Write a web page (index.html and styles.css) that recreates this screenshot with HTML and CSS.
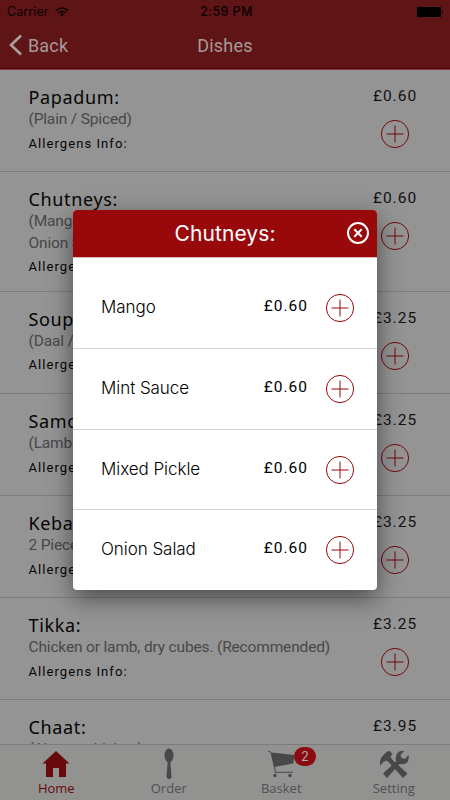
FILE: index.html
```html
<!DOCTYPE html>
<html lang="en">
<head>
<meta charset="utf-8">
<title>Dishes</title>
<link rel="stylesheet" href="styles.css">
</head>
<body>
<svg width="0" height="0" class="defs"><symbol id="plus" viewBox="0 0 28 28"><circle cx="14" cy="14" r="13.6"/><path d="M14 5.5v17M5.5 14h17"/></symbol></svg>
<div class="app">
  <header class="header">
    <div class="status">
      <span class="carrier">Carrier <svg class="wifi" viewBox="0 0 14 10"><path d="M1 3.6Q7-1.6 13 3.6M3.2 6Q7 2.8 10.8 6" fill="none" stroke="#0a0000" stroke-width="1.5"/><path d="M4.8 7.3Q7 5.8 9.2 7.3L7 9.6z" fill="#0a0000"/></svg></span>
      <span class="time">2:59 PM</span>
      <svg class="battery" viewBox="0 0 27 10"><rect width="24" height="10" rx="1"/><path d="M25 3.5q2 1.500 0 3z"/></svg>
    </div>
    <div class="nav">
      <span class="back"><svg viewBox="0 0 14 22"><path d="M12 1.500L2 11l10 9.500"/></svg>Back</span>
      <h1>Dishes</h1>
      <span></span>
    </div>
  </header>
  <main class="list">
    <section class="dish"><div><h2>Papadum:</h2><p>(Plain / Spiced)</p><small>Allergens Info:</small></div><div class="buy"><b>£0.60</b><svg class="plus"><use href="#plus"/></svg></div></section>
    <section class="dish tall"><div><h2>Chutneys:</h2><p>(Mango<br>Onion Salad)</p><small>Allergens Info:</small></div><div class="buy"><b>£0.60</b><svg class="plus"><use href="#plus"/></svg></div></section>
    <section class="dish"><div><h2>Soup:</h2><p>(Daal /</p><small>Allergens Info:</small></div><div class="buy"><b>£3.25</b><svg class="plus"><use href="#plus"/></svg></div></section>
    <section class="dish"><div><h2>Samosa:</h2><p>(Lamb</p><small>Allergens Info:</small></div><div class="buy"><b>£3.25</b><svg class="plus"><use href="#plus"/></svg></div></section>
    <section class="dish"><div><h2>Kebab:</h2><p>2 Pieces</p><small>Allergens Info:</small></div><div class="buy"><b>£3.25</b><svg class="plus"><use href="#plus"/></svg></div></section>
    <section class="dish"><div><h2>Tikka:</h2><p>Chicken or lamb, dry cubes. (Recommended)</p><small>Allergens Info:</small></div><div class="buy"><b>£3.25</b><svg class="plus"><use href="#plus"/></svg></div></section>
    <section class="dish"><div><h2>Chaat:</h2><p>(Aloo or chicken)</p></div><div class="buy"><b>£3.95</b></div></section>
  </main>
  <nav class="tabs">
    <a class="tab active"><svg viewBox="0 0 32 32"><path d="M16 3L2.500 15.500H6V29h7v-9h6v9h7V15.500h3.500z"/></svg>Home</a>
    <a class="tab"><svg viewBox="0 0 32 32"><ellipse cx="16" cy="7.500" rx="4.500" ry="7"/><path d="M14.800 13h2.400l1.300 15q0 3-2.500 3t-2.500-3z"/></svg>Order</a>
    <a class="tab"><svg viewBox="0 0 32 32"><path d="M6.200 4.500L29.500 7 28.300 15.500 9 19z"/><path d="M3 3.200l3 1 4.300 18.600-.3 1.500H28" fill="none" stroke="#484848"/><circle cx="10" cy="27.500" r="1.700"/><circle cx="25" cy="27.500" r="1.700"/></svg>Basket<i class="badge">2</i></a>
    <a class="tab"><svg viewBox="0 0 32 32"><path d="M2.200 18Q1 11 5.500 7L9 3.500l2.500-.5 3 3-2 2.500 1.500 3L29.500 25.500 25 30 10.500 14l-2.500-1.500Q4.500 14 2.200 18z"/><path d="M5 25.500L18 13.500Q17 8 19.500 5q3-3 6.500-2l-3.500 4 1 3 3.500 1 3.500-4q1 5-2 8-3 2-7 1L9 30z"/></svg>Setting</a>
  </nav>
</div>
<div class="modal">
  <div class="modal-head"><span></span><h3>Chutneys:</h3><svg class="close" viewBox="0 0 22 22"><circle cx="11" cy="11" r="10"/><path d="M7.300 7.300l7.400 7.400M14.700 7.300l-7.400 7.400"/></svg></div>
  <div class="option"><span>Mango</span><b>£0.60</b><svg class="plus"><use href="#plus"/></svg></div>
  <div class="option"><span>Mint Sauce</span><b>£0.60</b><svg class="plus"><use href="#plus"/></svg></div>
  <div class="option"><span>Mixed Pickle</span><b>£0.60</b><svg class="plus"><use href="#plus"/></svg></div>
  <div class="option"><span>Onion Salad</span><b>£0.60</b><svg class="plus"><use href="#plus"/></svg></div>
</div>
</body>
</html>
```
FILE: styles.css
```css
* { box-sizing: border-box; margin: 0; }
body { width: 450px; height: 800px; overflow: hidden; font-family: Roboto, sans-serif; background: #949494; }
.defs { position: absolute; }
.app { display: flex; flex-direction: column; height: 800px; }
.header { height: 70px; flex: none; background: #5f1416; border-bottom: 1px solid #7a4444; box-shadow: inset 0 -1px #5c0004; }
.status { height: 23px; padding: 0 6px 0 7px; display: grid; grid-template-columns: 1fr auto 1fr; align-items: center; font: 12.5px Inter, sans-serif; color: #0a0000; }
.carrier { display: flex; align-items: center; gap: 6px; letter-spacing: .1px; }
.wifi { width: 14px; height: 10px; }
.time { font-weight: 500; letter-spacing: .4px; padding-left: 2px; }
.battery { width: 27px; height: 10px; justify-self: end; fill: #000; }
.nav { height: 44px; display: grid; grid-template-columns: 1fr auto 1fr; align-items: center; padding: 0 9px; color: #a69a9a; }
.back { display: flex; align-items: center; gap: 5px; font-size: 18px; letter-spacing: .15px; }
.back svg { width: 14px; height: 22px; fill: none; stroke: #aaa0a0; stroke-width: 2.600; }
h1 { font-size: 18px; font-weight: 400; letter-spacing: .2px; }
.list { flex: 1; overflow: hidden; min-height: 0; }
.dish { height: 102.100px; padding: 15px 33px 0 28.500px; display: flex; justify-content: space-between; border-bottom: 1px solid #7c7c7c; }
.tall { height: 119.600px; }
h2 { font: 400 18px/24px "Noto Sans", sans-serif; letter-spacing: .650px; color: #050505; }
.dish p { font-size: 15.500px; line-height: 21.500px; color: #484848; font-weight: 400; letter-spacing: -.160px; white-space: nowrap; }
.dish small { display: block; font-size: 13px; line-height: 16px; margin-top: 5.300px; letter-spacing: 1.070px; color: #050505; }
.buy { width: 44px; display: flex; flex-direction: column; align-items: center; gap: 13px; }
b { font-size: 15.500px; line-height: 22px; font-weight: 400; letter-spacing: 1px; color: #111; white-space: nowrap; }
.plus { display: block; width: 28px; height: 28px; fill: none; stroke: #73070a; stroke-width: 1; overflow: visible; }
.tabs { height: 56.500px; flex: none; border-top: 1px solid #7c7c7c; background: #929290; display: grid; grid-template-columns: repeat(4, 1fr); }
.tab { position: relative; display: flex; flex-direction: column; align-items: center; padding-top: 3.500px; font: 13px/17px "Open Sans", sans-serif; color: #505050; fill: #484848; }
.tab svg { width: 32px; height: 32px; }
.active { color: #67080c; fill: #68090d; }
.badge { position: absolute; left: 69px; top: 2.500px; width: 22px; height: 19px; border-radius: 10px; background: #8c0b0e; color: #aaa; font: 13px/19px Inter, sans-serif; text-align: center; }
.modal { position: absolute; left: 73px; top: 210px; width: 304px; height: 380px; border-radius: 4px; overflow: hidden; background: #fff; box-shadow: 0 8px 24px rgba(0,0,0,.5); }
.modal-head { height: 48px; background: #99090c; display: grid; grid-template-columns: 1fr auto 1fr; align-items: center; padding: 0 8.500px; border-bottom: 1px solid #d7bcbc; }
.modal-head svg { margin-top: -2px; }
h3 { font: 400 21px Inter, sans-serif; letter-spacing: .1px; color: #fff; }
.close { width: 22px; height: 22px; justify-self: end; fill: none; stroke: #fff; stroke-width: 2; }
.option { height: 80.500px; padding: 10px 23px 0 28px; display: flex; align-items: flex-start; border-bottom: 1px solid #d4d4d4; }
.option span { flex: 1; margin-top: 17px; font: 300 17px/24px Inter, sans-serif; letter-spacing: -.05px; color: #000; }
.option b { margin: 17px 18px 0 0; color: #000; }
.option .plus { margin-top: 16px; stroke: #99090c; }
.modal-head + .option { height: 91px; padding-top: 20px; }
.option:last-child { border: 0; }
```
